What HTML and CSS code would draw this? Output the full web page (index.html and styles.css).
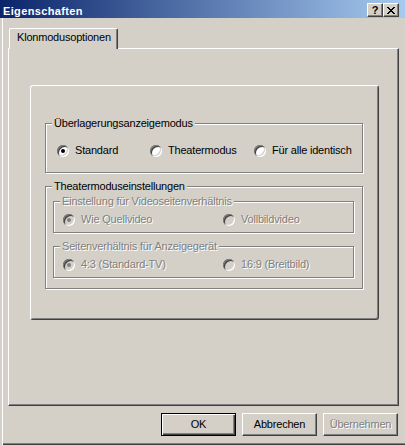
FILE: index.html
```html
<!DOCTYPE html>
<html lang="de">
<head>
<meta charset="utf-8">
<title>Eigenschaften</title>
<link rel="stylesheet" href="styles.css">
</head>
<body>
<div class="window">
  <div class="titlebar">
    <span class="title">Eigenschaften</span>
    <div class="caption-btns">
      <span class="cbtn help">?</span>
      <span class="cbtn close"><svg width="8" height="7" viewBox="0 0 8 7" shape-rendering="crispEdges"><path fill="#000" d="M0 0h2v1H0z M6 0h2v1H6z M1 1h2v1H1z M5 1h2v1H5z M2 2h4v1H2z M3 3h2v1H3z M2 4h4v1H2z M1 5h2v1H1z M5 5h2v1H5z M0 6h2v1H0z M6 6h2v1H6z"/></svg></span>
    </div>
  </div>
  <div class="client">
    <div class="tabs"><div class="tab">Klonmodusoptionen</div></div>
    <div class="panel">
      <div class="inner">
        <fieldset class="group g1">
          <legend>Überlagerungsanzeigemodus</legend>
          <div class="row cols3">
            <div class="opt"><span class="radio checked"></span>Standard</div>
            <div class="opt"><span class="radio"></span>Theatermodus</div>
            <div class="opt"><span class="radio"></span>Für alle identisch</div>
          </div>
        </fieldset>
        <fieldset class="group g2">
          <legend>Theatermoduseinstellungen</legend>
          <div class="g2-body">
            <fieldset class="group sub disabled">
              <legend>Einstellung für Videoseitenverhältnis</legend>
              <div class="row cols2">
                <div class="opt"><span class="radio checked"></span>Wie Quellvideo</div>
                <div class="opt"><span class="radio"></span>Vollbildvideo</div>
              </div>
            </fieldset>
            <fieldset class="group sub sub-b disabled">
              <legend>Seitenverhältnis für Anzeigegerät</legend>
              <div class="row cols2">
                <div class="opt"><span class="radio checked"></span>4:3 (Standard-TV)</div>
                <div class="opt"><span class="radio"></span>16:9 (Breitbild)</div>
              </div>
            </fieldset>
          </div>
        </fieldset>
      </div>
    </div>
    <div class="buttons">
      <div class="btn default">OK</div>
      <div class="btn">Abbrechen</div>
      <div class="btn disabled">Übernehmen</div>
    </div>
  </div>
</div>
</body>
</html>
```

FILE: styles.css
```css
html, body {
  margin: 0;
  padding: 0;
}
body {
  background: #d4d0c8;
  font-family: "Liberation Sans", Arial, sans-serif;
  font-size: 11px;
  color: #000;
  letter-spacing: -0.2px;
}
.window {
  width: 405px;
  height: 445px;
  box-sizing: border-box;
  overflow: hidden;
  box-shadow: inset 2px 0 0 #d4d0c8, inset 3px 0 0 #fff,
              inset 0 -1px 0 #404040, inset 0 -2px 0 #808080;
}
.titlebar {
  height: 18px;
  background: linear-gradient(to right, #0a246a, #a6caf0);
  display: flex;
  justify-content: space-between;
  align-items: flex-start;
}
.title {
  color: #fff;
  font-weight: bold;
  line-height: 14px;
  padding: 4px 0 0 3px;
  letter-spacing: 0.35px;
}
.caption-btns {
  display: flex;
  margin: 3px 6px 0 0;
}
.cbtn {
  width: 16px;
  height: 14px;
  box-sizing: border-box;
  background: #d4d0c8;
  border: 1px solid;
  border-color: #fff #404040 #404040 #fff;
  box-shadow: inset -1px -1px 0 #808080;
  display: flex;
  align-items: center;
  justify-content: center;
  font-weight: bold;
  font-size: 11px;
  line-height: 12px;
  letter-spacing: 0;
}
.client {
  padding: 10px 6px 0 8px;
}
.tabs {
  height: 20px;
  display: flex;
  padding-left: 1px;
}
.tab {
  position: relative;
  z-index: 1;
  box-sizing: border-box;
  width: 109px;
  height: 21px;
  background: #d4d0c8;
  border-top: 1px solid #fff;
  border-left: 1px solid #fff;
  border-right: 1px solid #404040;
  border-top-left-radius: 2px;
  border-top-right-radius: 2px;
  box-shadow: inset -1px 0 0 #808080;
  padding: 2px 0 0 7px;
  line-height: 13px;
  white-space: nowrap;
}
.panel {
  height: 358px;
  box-sizing: border-box;
  border: 1px solid;
  border-color: #fff #404040 #404040 #fff;
  box-shadow: inset -1px -1px 0 #808080;
}
.inner {
  margin: 36px 0 0 21px;
  width: 349px;
  height: 235px;
  box-sizing: border-box;
  border: 1px solid;
  border-color: #fff #404040 #404040 #fff;
  border-radius: 3px;
  box-shadow: inset -1px -1px 0 #808080;
  padding: 31px 15px 0 14px;
}
.group {
  margin: 0;
  padding: 0;
  min-width: 0;
  border: 1px solid #808080;
  box-shadow: inset 1px 1px 0 #fff, 1px 1px 0 #fff;
}
.group legend {
  margin-left: 6px;
  padding: 0 2px;
  line-height: 13px;
  background: #d4d0c8;
  white-space: nowrap;
}
.row {
  display: grid;
  align-items: center;
  height: 13px;
}
.g1 .row {
  padding: 14px 0 15px 11px;
  grid-template-columns: 93px 104px auto;
}
.g2 {
  margin-top: 7px;
}
.g2-body {
  padding: 2px 8px 10px 7px;
}
.sub .row {
  padding: 5px 0 6px 9px;
  grid-template-columns: 160px auto;
}
.sub-b {
  margin-top: 7px;
}
.opt {
  display: flex;
  align-items: center;
  height: 13px;
  line-height: 13px;
  white-space: nowrap;
}
.radio {
  position: relative;
  flex: none;
  width: 12px;
  height: 12px;
  margin-right: 6px;
  border-radius: 50%;
  background: #fff;
  box-shadow: inset 1px 1px 0 #808080, inset -1px -1px 0 #fff,
              inset 2px 2px 0 #404040, inset -2px -2px 0 #d4d0c8;
}
.radio.checked::after {
  content: "";
  position: absolute;
  left: 4px;
  top: 4px;
  width: 4px;
  height: 4px;
  border-radius: 50%;
  background: #000;
}
.disabled legend,
.disabled .opt {
  color: #808080;
  text-shadow: 1px 1px 0 #fff;
}
.disabled .radio {
  background: #d4d0c8;
}
.disabled .radio.checked::after {
  background: #808080;
}
.buttons {
  display: flex;
  justify-content: flex-end;
  gap: 6px;
  margin-top: 7px;
  padding-right: 1px;
}
.btn {
  width: 75px;
  height: 23px;
  box-sizing: border-box;
  border: 1px solid;
  border-color: #fff #404040 #404040 #fff;
  box-shadow: inset -1px -1px 0 #808080;
  display: flex;
  align-items: center;
  justify-content: center;
  line-height: 13px;
}
.btn.default {
  border-color: #000;
  box-shadow: inset 1px 1px 0 #fff, inset -1px -1px 0 #404040, inset -2px -2px 0 #808080;
}
.btn.disabled {
  color: #808080;
  text-shadow: 1px 1px 0 #fff;
}
```
